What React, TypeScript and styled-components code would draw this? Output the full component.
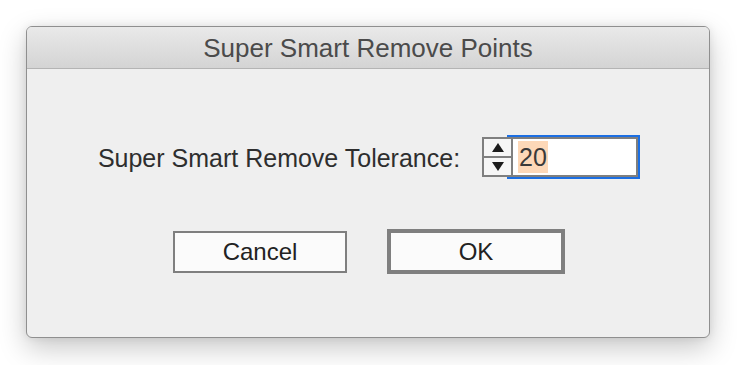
import styled, { createGlobalStyle } from "styled-components";

export default function App() {
  return (
    <>
      <GlobalStyle />
      <Page>
        <Window>
          <TitleBar>Super Smart Remove Points</TitleBar>
          <Body>
            <FieldRow>
              <Label>Super Smart Remove Tolerance:</Label>
              <SpinField>
                <Stepper>
                  <StepButton>
                    <Arrow $dir="up" />
                  </StepButton>
                  <StepButton>
                    <Arrow $dir="down" />
                  </StepButton>
                </Stepper>
                <InputBox>
                  <Selected>20</Selected>
                </InputBox>
              </SpinField>
            </FieldRow>
            <ButtonRow>
              <Button>Cancel</Button>
              <Button $default>OK</Button>
            </ButtonRow>
          </Body>
        </Window>
      </Page>
    </>
  );
}

const GlobalStyle = createGlobalStyle`
  body {
    margin: 0;
    background: #ffffff;
    font-family: "Liberation Sans", Arial, sans-serif;
  }
`;

const Page = styled.div`
  width: 737px;
  height: 365px;
  padding: 26px 0 0 26px;
  box-sizing: border-box;
`;

const Window = styled.div`
  width: 684px;
  height: 312px;
  box-sizing: border-box;
  border: 1px solid #8f8f8f;
  border-radius: 6px;
  background: #efefef;
  box-shadow: 0 10px 28px rgba(0, 0, 0, 0.22), 0 0 8px rgba(0, 0, 0, 0.08);
  overflow: hidden;
  display: flex;
  flex-direction: column;
`;

const TitleBar = styled.div`
  height: 42px;
  flex-shrink: 0;
  border-bottom: 1px solid #b4b4b4;
  background: linear-gradient(#e9e9e9, #d4d4d4);
  display: flex;
  align-items: center;
  justify-content: center;
  padding-top: 2px;
  box-sizing: border-box;
  font-size: 26px;
  color: #4b4b4b;
`;

const Body = styled.div`
  flex: 1;
  display: flex;
  flex-direction: column;
  align-items: center;
  padding-top: 68px;
  gap: 52px;
`;

const FieldRow = styled.div`
  display: flex;
  align-items: center;
  gap: 22px;
`;

const Label = styled.span`
  font-size: 25px;
  color: #2e2e2e;
  margin-top: 3px;
`;

const SpinField = styled.div`
  display: flex;
  align-items: stretch;
`;

const Stepper = styled.div`
  position: relative;
  z-index: 1;
  width: 31px;
  height: 40px;
  box-sizing: border-box;
  border: 2px solid #7f7f7f;
  background: #f6f6f6;
  display: flex;
  flex-direction: column;
`;

const StepButton = styled.div`
  flex: 1;
  display: flex;
  align-items: center;
  justify-content: center;
  & + & {
    border-top: 2px solid #7f7f7f;
  }
`;

const Arrow = styled.div<{ $dir: "up" | "down" }>`
  width: 0;
  height: 0;
  border-left: 6px solid transparent;
  border-right: 6px solid transparent;
  ${(p) =>
    p.$dir === "up"
      ? "border-bottom: 9px solid #1c1c1c;"
      : "border-top: 9px solid #1c1c1c;"}
`;

const InputBox = styled.div`
  margin-left: -4px;
  width: 129px;
  height: 40px;
  box-sizing: border-box;
  border: 2px solid #7f7f7f;
  background: #ffffff;
  box-shadow: 0 0 0 2px #1c6fe3;
  display: flex;
  align-items: center;
  padding-left: 7px;
`;

const Selected = styled.span`
  background: #fdd8b8;
  font-size: 25px;
  line-height: 32px;
  color: #3a3a3a;
  padding: 0 1px;
`;

const ButtonRow = styled.div`
  display: flex;
  align-items: center;
  gap: 40px;
  margin-left: 2px;
`;

const Button = styled.div<{ $default?: boolean }>`
  box-sizing: border-box;
  width: ${(p) => (p.$default ? 178 : 174)}px;
  height: ${(p) => (p.$default ? 45 : 42)}px;
  border: ${(p) => (p.$default ? 4 : 2)}px solid #7f7f7f;
  background: #fbfbfb;
  display: flex;
  align-items: center;
  justify-content: center;
  font-size: 24px;
  color: #222222;
`;
